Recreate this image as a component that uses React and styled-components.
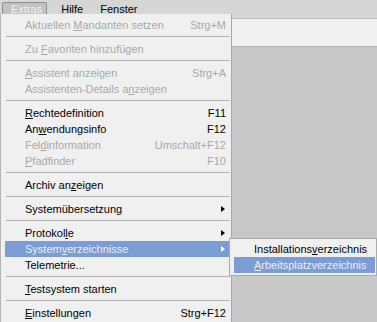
import styled, { createGlobalStyle } from 'styled-components'

const GlobalStyle = createGlobalStyle`
  html, body {
    margin: 0;
    padding: 0;
  }
  body {
    width: 377px;
    height: 322px;
    overflow: hidden;
    background: #c8c8c8;
    font-family: "Liberation Sans", Arial, sans-serif;
    font-size: 11px;
  }
`

const Screen = styled.div`
  position: relative;
  display: flex;
  flex-direction: column;
  width: 377px;
  height: 322px;
  overflow: hidden;
`

const MenuBar = styled.div`
  display: flex;
  align-items: flex-start;
  height: 19px;
  box-sizing: border-box;
  padding: 2px 0 0 2px;
  background: #d6d6d6;
  border-bottom: 1px solid #bdbdbd;
`

const BarTab = styled.div`
  height: 12px;
  line-height: 12px;
  padding: 0 4px 1px 8px;
  color: #f4f4f4;
  background: #c2c2c2;
  border: 1px solid #8e8e8e;
  border-bottom: none;
  border-radius: 2px 2px 0 0;
`

const BarItem = styled.div`
  height: 12px;
  line-height: 12px;
  padding: 1px 3px 0 14px;
  color: #000;
`

const Toolbar = styled.div`
  height: 27px;
  background: #f0f0f0;
  border-bottom: 1px solid #b4b4b4;
`

const Workspace = styled.div`
  flex: 1;
  background: #c8c8c8;
`

const Dropdown = styled.div`
  position: absolute;
  top: 14px;
  left: 0;
  width: 232px;
  height: 320px;
  box-sizing: border-box;
  display: flex;
  flex-direction: column;
  padding: 3px 1px 0 4px;
  background: #f0f0f0;
  border-left: 1px solid #b4b4b4;
  border-right: 1px solid #a8a8a8;
`

const Item = styled.div`
  position: relative;
  display: flex;
  align-items: center;
  height: 16px;
  line-height: 16px;
  padding: 0 4px 0 20px;
  white-space: nowrap;
  color: ${p => (p.$active ? '#e9eefa' : p.$disabled ? '#a8a8a8' : '#000')};
  background: ${p => (p.$active ? '#7c9dd3' : 'transparent')};
`

const Label = styled.span`
  flex: 1;
`

const Shortcut = styled.span`
  margin-left: 12px;
`

const Arrow = styled.span`
  width: 0;
  height: 0;
  margin-right: 1px;
  border-left: 4px solid ${p => (p.$light ? '#ffffff' : '#000')};
  border-top: 3.5px solid transparent;
  border-bottom: 3.5px solid transparent;
`

const Separator = styled.div`
  height: 8px;
  margin-left: 1px;
  &::before {
    content: '';
    display: block;
    margin-top: 3px;
    height: 1px;
    background: #b0b0b0;
  }
`

const Key = styled.u`
  text-decoration: underline;
  text-underline-offset: 1px;
`

const Submenu = styled.div`
  position: absolute;
  top: -3px;
  left: 224px;
  width: 148px;
  box-sizing: border-box;
  display: flex;
  flex-direction: column;
  padding: 2px 1px 2px 4px;
  background: #f0f0f0;
  border: 1px solid #ababab;
`

const SubItem = styled(Item)`
  padding-right: 8px;
`

function Accel({ text, at }) {
  if (at == null) return text
  return (
    <>
      {text.slice(0, at)}
      <Key>{text[at]}</Key>
      {text.slice(at + 1)}
    </>
  )
}

const entries = [
  { label: 'Aktuellen Mandanten setzen', at: 10, key: 'Strg+M', disabled: true },
  'sep',
  { label: 'Zu Favoriten hinzufügen', at: 3, disabled: true },
  'sep',
  { label: 'Assistent anzeigen', at: 0, key: 'Strg+A', disabled: true },
  { label: 'Assistenten-Details anzeigen', at: 21, disabled: true },
  'sep',
  { label: 'Rechtedefinition', at: 0, key: 'F11' },
  { label: 'Anwendungsinfo', at: 2, key: 'F12' },
  { label: 'Feldinformation', at: 3, key: 'Umschalt+F12', disabled: true },
  { label: 'Pfadfinder', at: 0, key: 'F10', disabled: true },
  'sep',
  { label: 'Archiv anzeigen', at: 9 },
  'sep',
  { label: 'Systemübersetzung', sub: true },
  'sep',
  { label: 'Protokolle', at: 8, sub: true },
  { label: 'Systemverzeichnisse', at: 6, sub: true, active: true, open: true },
  { label: 'Telemetrie...' },
  'sep',
  { label: 'Testsystem starten', at: 0 },
  'sep',
  { label: 'Einstellungen', at: 0, key: 'Strg+F12' },
]

export default function App() {
  return (
    <>
      <GlobalStyle />
      <Screen>
        <MenuBar>
          <BarTab>
            <Accel text="Extras" at={1} />
          </BarTab>
          <BarItem>
            <Accel text="Hilfe" at={0} />
          </BarItem>
          <BarItem>
            <Accel text="Fenster" at={0} />
          </BarItem>
        </MenuBar>
        <Toolbar />
        <Workspace />

        <Dropdown>
          {entries.map((e, i) =>
            e === 'sep' ? (
              <Separator key={i} />
            ) : (
              <Item key={i} $disabled={e.disabled} $active={e.active}>
                <Label>
                  <Accel text={e.label} at={e.at} />
                </Label>
                {e.key && <Shortcut>{e.key}</Shortcut>}
                {e.sub && <Arrow $light={e.active} />}
                {e.open && (
                  <Submenu>
                    <SubItem>
                      <Accel text="Installationsverzeichnis" at={13} />
                    </SubItem>
                    <SubItem $active>
                      <Accel text="Arbeitsplatzverzeichnis" at={0} />
                    </SubItem>
                  </Submenu>
                )}
              </Item>
            )
          )}
        </Dropdown>
      </Screen>
    </>
  )
}
